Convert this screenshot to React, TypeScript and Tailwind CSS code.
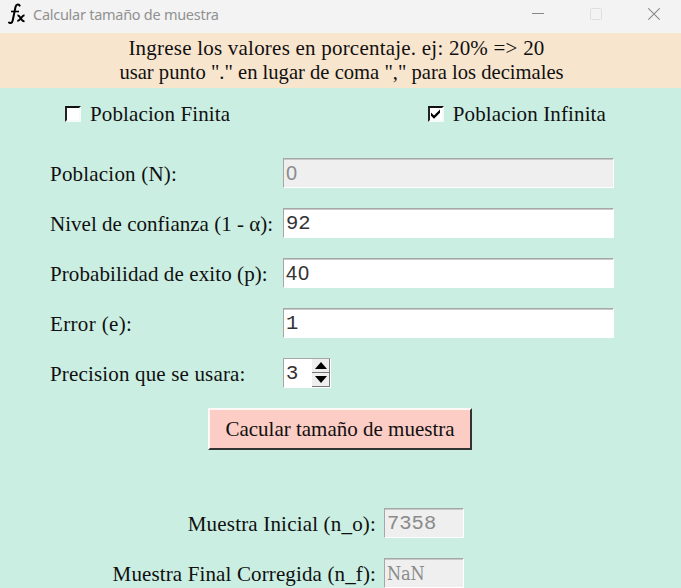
import type { ReactNode } from "react";

const serif = "font-['Liberation_Serif','Times_New_Roman',serif]";

const faces = {
  mono: "font-['Liberation_Mono','Courier_New',monospace] text-[20.5px] pt-px",
  round: "font-['Liberation_Sans',sans-serif] text-[20px] tracking-[0.9px]",
  slab: "font-['DejaVu_Serif_Condensed','DejaVu_Serif',serif] [font-stretch:condensed] text-[18px] tracking-[-0.2px] pt-px",
};

function Entry({ value, width, disabled = false, face = "mono" }: { value: string; width: string; disabled?: boolean; face?: keyof typeof faces }) {
  return (
    <div
      className={`flex h-[30px] shrink-0 items-center border border-t-[#a5a8a6] border-l-[#a5a8a6] border-r-white border-b-white pl-[2px] shadow-[inset_0_1px_0_#c8c9c8] ${width} ${
        disabled ? "bg-[#efefef] text-[#8b8b8b]" : "bg-white text-[#333]"
      }`}
    >
      <span className={`leading-6 ${faces[face]}`}>{value}</span>
    </div>
  );
}

function Check({ checked = false, children }: { checked?: boolean; children: ReactNode }) {
  return (
    <div className="flex items-center gap-[9px] tracking-[0.12px]">
      <div className="flex h-4 w-4 items-center justify-center border-2 border-t-[#111] border-l-[#222] border-r-[#f4fbf8] border-b-[#f4fbf8] bg-white">
        {checked && (
          <svg width="11" height="11" viewBox="0 0 11 11" className="shrink-0">
            <path d="M1 3.5v3.2l3 3 6-6V.6l-6 6z" fill="#000" />
          </svg>
        )}
      </div>
      {children}
    </div>
  );
}

function Row({ label, tracking, children }: { label: ReactNode; tracking: string; children: ReactNode }) {
  return (
    <div className="flex h-[30px] items-center">
      <div className={`w-[233px] shrink-0 pt-px whitespace-nowrap ${tracking}`}>{label}</div>
      {children}
    </div>
  );
}

export default function App() {
  return (
    <div className={`h-[588px] w-[681px] overflow-hidden bg-[#cbeee2] text-[21px] leading-6 text-[#101010] ${serif}`}>
      <header className="flex h-[33px] items-center bg-[#f3f3f3] pr-[21px] pb-[5px] pl-[8px]">
        <svg width="18" height="22" viewBox="0 0 18 22" fill="none" stroke="#000">
          <path d="M12 3.3C11 .8 8.2 1 7.5 4L4.7 17.5C4.2 20.2 1.7 21 .7 18.8" strokeWidth="2" />
          <path d="M3 8.5h8" strokeWidth="1.6" />
          <path d="M9.5 12.5c3-.8 3.2 6.5 7 5.6M16.5 12.3c-2.5 0-4.5 5.5-7.2 5.8" strokeWidth="2" />
        </svg>
        <span className="ml-[7px] pb-px font-['Noto_Sans','Open_Sans',sans-serif] text-[14.5px] tracking-[-0.27px] text-[#919191]">Calcular tamaño de muestra</span>
        <div className="ml-auto flex items-center gap-[46px]">
          <svg width="12" height="14" viewBox="0 0 12 14"><path d="M0 6.5h12" stroke="#888" /></svg>
          <svg width="12" height="14" viewBox="0 0 12 14"><rect x=".5" y="1.5" width="11" height="11" rx="1" fill="none" stroke="#dedede" /></svg>
          <svg width="12" height="14" viewBox="0 0 12 14"><path d="M.3 1.3l11.4 11.4M11.7 1.3L.3 12.7" stroke="#858585" strokeWidth="1.2" /></svg>
        </div>
      </header>
      <div className="flex h-[55px] flex-col items-center bg-[#f8e5ce] pt-[3px] whitespace-nowrap">
        <span className="mr-[8px] tracking-[0.22px]">Ingrese los valores en porcentaje. ej: 20% =&gt; 20</span>
        <span className="ml-[2px] text-[20.6px]">usar punto "." en lugar de coma "," para los decimales</span>
      </div>
      <div className="flex items-center justify-between pt-[14px] pr-[75px] pl-[65px]">
        <Check>Poblacion Finita</Check>
        <Check checked>Poblacion Infinita</Check>
      </div>
      <div className="mt-[32px] flex flex-col gap-5 pl-[50px]">
        <Row label="Poblacion (N):" tracking="tracking-[0.2px]"><Entry value="0" width="w-[331px]" disabled face="round" /></Row>
        <Row label="Nivel de confianza (1 - α):" tracking="tracking-[0.02px]"><Entry value="92" width="w-[331px]" /></Row>
        <Row label="Probabilidad de exito (p):" tracking="tracking-[0.1px]"><Entry value="40" width="w-[331px]" face="round" /></Row>
        <Row label="Error (e):" tracking="tracking-[0.35px]"><Entry value="1" width="w-[331px]" /></Row>
        <Row label="Precision que se usara:" tracking="tracking-[0.16px]">
          <div className="flex h-[30px] w-[48px] items-center border border-t-[#a5a8a6] border-l-[#a5a8a6] border-r-white border-b-white bg-white pl-[2px] text-[#333]">
            <span className={`leading-6 ${faces.mono}`}>3</span>
            <div className="ml-auto flex h-full w-[18px] flex-col bg-[#efefef]">
              <div className="flex h-[14px] items-center justify-center border-r border-b border-[#777]">
                <svg width="12" height="7" viewBox="0 0 12 7"><path d="M6 0l6 7H0z" /></svg>
              </div>
              <div className="flex h-[14px] items-center justify-center border-r border-b border-[#777]">
                <svg width="12" height="7" viewBox="0 0 12 7"><path d="M0 0h12L6 7z" /></svg>
              </div>
            </div>
          </div>
        </Row>
      </div>
      <button className="mt-5 ml-[208px] block h-[42px] w-[264px] border-2 border-t-[#fff8f7] border-l-[#fff8f7] border-r-[#333] border-b-[#333] bg-[#fbcdc5] whitespace-nowrap">
        Cacular tamaño de muestra
      </button>
      <div className="mt-[58px] flex flex-col gap-5">
        <div className="flex h-[30px] items-center gap-[8px]">
          <div className="w-[376px] pt-px text-right tracking-[0.18px] whitespace-nowrap">Muestra Inicial (n_o):</div>
          <Entry value="7358" width="w-[80px]" disabled />
        </div>
        <div className="flex h-[30px] items-center gap-[8px]">
          <div className="w-[376px] pt-px text-right tracking-[0.13px] whitespace-nowrap">Muestra Final Corregida (n_f):</div>
          <Entry value="NaN" width="w-[80px]" disabled face="slab" />
        </div>
      </div>
    </div>
  );
}
